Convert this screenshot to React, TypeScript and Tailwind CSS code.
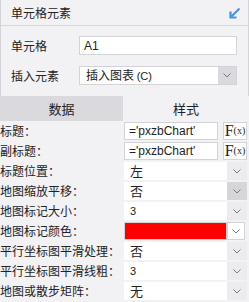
import React from 'react';

const rows = [
  { label: '标题：', kind: 'fx', value: "='pxzbChart'" },
  { label: '副标题：', kind: 'fx', value: "='pxzbChart'" },
  { label: '标题位置：', kind: 'select', value: '左' },
  { label: '地图缩放平移：', kind: 'select', value: '否', hover: true },
  { label: '地图标记大小：', kind: 'select', value: '3', small: true },
  { label: '地图标记颜色：', kind: 'color', value: '' },
  { label: '平行坐标图平滑处理：', kind: 'select', value: '否' },
  { label: '平行坐标图平滑线粗：', kind: 'select', value: '3', small: true },
  { label: '地图或散步矩阵：', kind: 'select', value: '无' },
];

function Chevron() {
  return (
    <svg width="8" height="5" viewBox="0 0 8 5" fill="none">
      <path d="M0.5 0.5 L4 4 L7.5 0.5" stroke="#7a7a7a" strokeWidth="1" />
    </svg>
  );
}

function Fx() {
  return (
    <div className="flex h-full w-[24px] items-center justify-center border border-[#d4d4d8] bg-white">
      <span className="font-['Liberation_Serif',serif] text-[16px] leading-none text-[#222]">F</span>
      <span className="font-['Liberation_Serif',serif] text-[10px] leading-none text-[#222]">(x)</span>
    </div>
  );
}

export default function App() {
  return (
    <div className="h-[302px] w-[249px] overflow-hidden bg-[#f2f2f5] font-['Noto_Sans_CJK_SC',sans-serif] text-[12px] text-[#222]">
      <div className="border-l border-r border-[#d4d4d8]">
        <div className="flex h-[26px] items-center justify-between border-b border-[#d8d8dc] pl-[10px] pr-[7px]">
          <span className="leading-none">单元格元素</span>
          <svg width="12" height="12" viewBox="0 0 12 12" fill="none">
            <path d="M10.5 1.5 L2.5 9.5" stroke="#4a90e2" strokeWidth="2.2" />
            <path d="M1.5 4.5 L1.5 10.5 L7.5 10.5" stroke="#4a90e2" strokeWidth="2.2" />
          </svg>
        </div>

        <div className="flex flex-col gap-[11px] pb-[11px] pt-[10px]">
          <div className="flex h-[19px] items-center">
            <span className="w-[78px] pl-[10px]">单元格</span>
            <div className="flex h-full w-[158px] items-center border border-[#d4d4d8] bg-white pl-[4px] font-['Liberation_Sans',sans-serif] text-[12px]">
              A1
            </div>
          </div>
          <div className="flex h-[19px] items-center">
            <span className="w-[78px] pl-[10px]">插入元素</span>
            <div className="flex h-full w-[158px] items-center border border-[#d4d4d8] bg-white">
              <span className="flex-1 pl-[6px]">
                插入图表 <span className="font-['Liberation_Sans',sans-serif] text-[11px]">(C)</span>
              </span>
              <div className="flex h-full w-[18px] items-center justify-center bg-[#dadade]">
                <Chevron />
              </div>
            </div>
          </div>
        </div>
      </div>

      <div className="grid h-[25px] grid-cols-[123px_1fr] items-stretch">
        <div className="flex items-center justify-center bg-[#dadade] text-[13px]">数据</div>
        <div className="flex items-center justify-center text-[13px]">样式</div>
      </div>

      <div className="flex flex-col pt-[1px]">
        {rows.map((row, i) => (
          <div key={i} className="mb-[2px] flex h-[18px] items-center">
            <span className="w-[124px] whitespace-nowrap leading-none">{row.label}</span>
            {row.kind === 'fx' && (
              <div className="flex h-full w-[123px] gap-[5px]">
                <div className="flex h-full w-[94px] items-center border border-[#d4d4d8] bg-white pl-[4px] font-['Liberation_Sans',sans-serif] text-[12px]">
                  {row.value}
                </div>
                <Fx />
              </div>
            )}
            {row.kind === 'select' && (
              <div className="flex h-full w-[123px]">
                <div
                  className={`flex h-full w-[103px] items-center bg-white pl-[6px] ${
                    row.small ? "font-['Liberation_Sans',sans-serif] text-[11px]" : 'text-[13px]'
                  }`}
                >
                  {row.value}
                </div>
                <div
                  className={`flex h-full w-[20px] items-center justify-center ${
                    row.hover ? 'bg-[#d6d6da]' : 'bg-[#ececef]'
                  }`}
                >
                  <Chevron />
                </div>
              </div>
            )}
            {row.kind === 'color' && (
              <div className="flex h-full w-[123px]">
                <div className="h-full w-[103px] border border-[#d4d4d8] bg-[#ff0000]" />
                <div className="flex h-full w-[18px] items-center justify-center border border-[#d4d4d8] bg-white">
                  <Chevron />
                </div>
              </div>
            )}
          </div>
        ))}
      </div>
    </div>
  );
}
